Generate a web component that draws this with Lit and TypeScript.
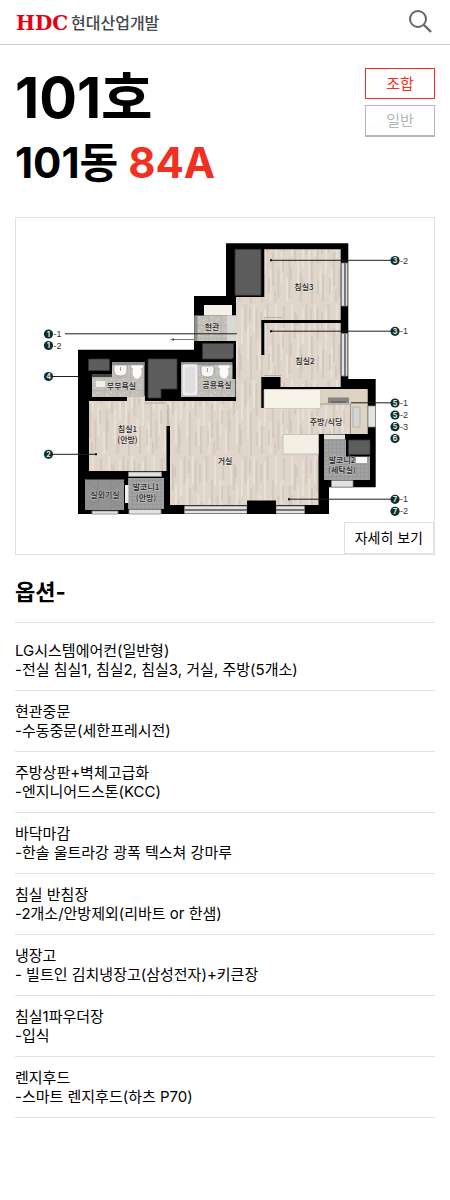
import { LitElement, html, css, svg } from "lit";
import { customElement, property } from "lit/decorators.js";

interface OptionItem {
  title: string;
  detail: string;
}

interface Marker {
  x: number;
  y: number;
  no: string;
  sub?: string;
}

interface RoomLabel {
  x: number;
  y: number;
  text: string;
}

const OPTIONS: OptionItem[] = [
  { title: "LG시스템에어컨(일반형)", detail: "-전실 침실1, 침실2, 침실3, 거실, 주방(5개소)" },
  { title: "현관중문", detail: "-수동중문(세한프레시전)" },
  { title: "주방상판+벽체고급화", detail: "-엔지니어드스톤(KCC)" },
  { title: "바닥마감", detail: "-한솔 울트라강 광폭 텍스쳐 강마루" },
  { title: "침실 반침장", detail: "-2개소/안방제외(리바트 or 한샘)" },
  { title: "냉장고", detail: "- 빌트인 김치냉장고(삼성전자)+키큰장" },
  { title: "침실1파우더장", detail: "-입식" },
  { title: "렌지후드", detail: "-스마트 렌지후드(하츠 P70)" },
];

const MARKERS: Marker[] = [
  { x: 48.5, y: 334, no: "1", sub: "-1" },
  { x: 48.5, y: 345.5, no: "1", sub: "-2" },
  { x: 48.5, y: 376.5, no: "4" },
  { x: 48.5, y: 454.3, no: "2" },
  { x: 395, y: 260.5, no: "3", sub: "-2" },
  { x: 395, y: 331.3, no: "3", sub: "-1" },
  { x: 395, y: 403, no: "5", sub: "-1" },
  { x: 395, y: 415, no: "5", sub: "-2" },
  { x: 395, y: 426.7, no: "5", sub: "-3" },
  { x: 395, y: 438.5, no: "6" },
  { x: 395, y: 499.3, no: "7", sub: "-1" },
  { x: 395, y: 511.3, no: "7", sub: "-2" },
];

const ROOMS: RoomLabel[] = [
  { x: 304, y: 289.5, text: "침실3" },
  { x: 305, y: 363.5, text: "침실2" },
  { x: 212, y: 330, text: "현관" },
  { x: 121.5, y: 388.5, text: "부부욕실" },
  { x: 217, y: 388, text: "공용욕실" },
  { x: 127.5, y: 432, text: "침실1" },
  { x: 127.5, y: 443, text: "(안방)" },
  { x: 225, y: 463.5, text: "거실" },
  { x: 326, y: 424.5, text: "주방/식당" },
  { x: 105, y: 498, text: "실외기실" },
  { x: 146, y: 490, text: "발코니1" },
  { x: 146, y: 501, text: "(안방)" },
  { x: 342, y: 462.5, text: "발코니2" },
  { x: 342, y: 473, text: "(세탁실)" },
];

@customElement("floor-plan")
export class FloorPlan extends LitElement {
  static styles = css`
    :host {
      display: block;
    }
    .plan {
      display: block;
      width: 100%;
      height: auto;
    }
    .room {
      font: 500 8px "Noto Sans CJK KR", sans-serif;
      fill: #222;
      stroke: #fff;
      stroke-opacity: 0.45;
      stroke-width: 1px;
      paint-order: stroke;
      text-anchor: middle;
    }
    .num {
      font: 700 7px Inter, sans-serif;
      fill: #e4efec;
      text-anchor: middle;
    }
    .sub {
      font: 400 9px "Liberation Sans", sans-serif;
      fill: #333;
    }
  `;

  private toilet(x: number, y: number) {
    return svg`<path d="M${x} ${y}h12v3h-1.500c1 6-.5 11-4.500 11s-5.500-5-4.500-11H${x}z" fill="#fbfbfb" stroke="#aaa" stroke-width=".5"/>`;
  }

  private basin(x: number, y: number) {
    return svg`<path d="M${x} ${y}h13v6q0 5-6.500 5t-6.500-5z" fill="#f6f6f6" stroke="#8d8d8d" stroke-width=".7"/>
      <path d="M${x + 6.5} ${y + 2}v4" stroke="#888" stroke-width=".8"/>`;
  }

  render() {
    return html`
      <svg class="plan" viewBox="16 218 418 336" role="img" aria-label="84A 평면도">
        <defs>
          <pattern id="wood" width="61" height="76" patternUnits="userSpaceOnUse">
            <rect width="61" height="76" fill="#dfd5cb" />
            <path
              d="M1.500 0v27M7 32v44M12.500 4v32M18 46v28M23.500 0v25M29 24v34M34.500 40v30M40 2v22M45.500 30v40M51 8v26M56.500 44v30"
              stroke="#d5c9be"
              stroke-width="2"
            />
            <path
              d="M4 22v36M10 0v28M15.500 38v28M21 6v40M26.500 42v32M32 0v30M37.500 24v32M43 50v24M48 0v28M54 30v34M59 4v36"
              stroke="#e8dfd6"
              stroke-width="2"
            />
            <path d="M6 3v14M17 8v18M25 50v16M31 62v12M13 52v14M39 30v14M47 40v12M58 50v16M53 10v12" stroke="#cbbfb4" />
          </pattern>
          <pattern id="tile" width="13" height="13" patternUnits="userSpaceOnUse">
            <rect width="13" height="13" fill="#c2bfb9" />
            <path d="M0 0h13M0 0v13" stroke="#aaa7a1" stroke-width=".8" />
            <path d="M2 4l3 2M8 9l3-2M6 2l2 1M3 10l2 1" stroke="#d6d3cd" />
          </pattern>
          <pattern id="mesh" width="4" height="4" patternUnits="userSpaceOnUse">
            <rect width="4" height="4" fill="#a2a2a2" />
            <path d="M0 0h4M0 0v4" stroke="#8b8b8b" stroke-width=".8" />
          </pattern>
        </defs>

        <path d="M226 243.300H348.300V379H375.700V487.300H329V514H78V349.700H194V296H226z" fill="#000" />

        <g fill="url(#wood)">
          <path d="M264.300 249.300H340.700V320H264.300z" />
          <path d="M264.300 323H340.700V387H280.500V377H264.300z" />
          <path d="M236 297H264.300V320H261.300V355H264.300V377H261.300V408H264V389H367.500V434H318.500V505H170V426H166.500V471H89V401H236z" />
          <path d="M264 355h1v22h-1zM264 297h1v22h-1zM127 396h18v6h-18z" />
        </g>
        <path d="M264 317.500h18M264 375.500h17M146 403h20M168 405v20" stroke="#b6aca2" stroke-width="1.200" fill="none" />

        <path d="M194.500 315.500H236V341H194.500z" fill="url(#tile)" />
        <path d="M227 315.500h9.500V341H227z" fill="#d9d8d2" />
        <path d="M194.500 316h3v25h-3z" fill="#8e8e8c" />
        <path d="M204 305h28v10.500h-28z" fill="#f5f1e6" />

        <g fill="#5d5d5d" stroke="#343434" stroke-width=".8">
          <path d="M235 249.300h26v46h-26z" />
          <path d="M202.500 343.500h31v15.500h-31z" />
          <path d="M88.500 359h21v11.500h-21z" />
          <path d="M148 359h29v30h-16v9h-13z" />
          <path d="M348.500 440h21.500v14.500h-21.500z" />
        </g>

        <path d="M92 374h20v-12h32.500v35H92z" fill="url(#tile)" />
        <path d="M112 362h32.500v3H112z" fill="#8d8d8d" />
        <path d="M92 374h20v3H92z" fill="#444" />
        <path d="M96 381h9v6h-9z" fill="#efefef" />
        ${this.basin(114, 365)} ${this.toilet(131, 365)}

        <path d="M181 362h54.500v35H181z" fill="url(#tile)" />
        <path d="M181 362h54.500v3H181z" fill="#8d8d8d" />
        <rect x="182" y="364" width="16" height="32" rx="2" fill="#ededed" stroke="#aaa" stroke-width=".8" />
        <rect x="185" y="367" width="10" height="26" rx="3" fill="#dedede" />
        ${this.basin(201, 366)} ${this.toilet(218, 365)}
        <path d="M232.500 358h3.500v21h-3.500z" fill="#000" />

        <path d="M264 389.500h56.500v19H264z" fill="#f7f3e9" stroke="#bfb9ad" stroke-width=".6" />
        <path d="M320.500 389.500H367.500V434H350V404H320.500z" fill="#ded2c2" />
        <path d="M320.500 404H350.500V434" fill="none" stroke="#8f8983" stroke-width=".8" />
        <path d="M328 397.500h21v5.500h-21z" fill="#858585" />
        <path d="M331 402h15" stroke="#555" />
        <path d="M353 407h7v20h-7z" fill="#d5d5d3" stroke="#aaa" stroke-width=".8" />
        <path d="M283 434.500h35.500v19.500H283z" fill="#f3efe5" stroke="#bbb5a9" stroke-width=".7" />

        <path d="M324 439.500h22v17h24V480h-46z" fill="url(#mesh)" />
        <path d="M324 434.500h21v5h-21z" fill="#e8e8e8" />
        <path d="M356 457h11v6h-11z" fill="#fafafa" />
        <path d="M85 479.500h39V510H85z" fill="#929292" />
        <path d="M85 479.500l39 30.500M124 479.500L85 510M98 479.500V510M111 479.500V510" stroke="#858585" stroke-width=".7" />
        <path d="M128 478h36v31h-36z" fill="url(#mesh)" />
        <path d="M125 485h3.500v18H125z" fill="#f0f0f0" />

        <g fill="#e2e2e2" stroke="#858585" stroke-width=".8">
          <path d="M128.500 472h33v4.500h-33z" />
          <path d="M92 511h26v3H92z" />
          <path d="M129 509.500h32v4.500h-32z" />
          <path d="M184.500 506h62.500v7.500h-62.500z" />
          <path d="M276 506h28.500v7.500H276z" />
          <path d="M331.500 480.500h21.500v6.500h-21.500z" />
          <path d="M368 406h7.500v21H368z" />
          <path d="M341.500 263h6v43h-6zM341.500 333.500h6v42.500h-6z" />
        </g>
        <path d="M184.500 510h62.500M276 510h28.500M345 263v43M345 333.500v42.500" stroke="#777" stroke-width="2" />
        <path d="M247 500.500h29V514h-29z" fill="#000" />

        <g stroke="#1d1d1d" stroke-width="1" fill="none">
          <path d="M65 333.800H237M53 376.500H78M53 454.300H96" />
          <path d="M271 260.300H391M271 331.200H391M351 402.800H391M289 499.200H391" />
        </g>
        <path d="M173 339.500H195" stroke="#777" stroke-width="1" />
        <path d="M170 339.500l4-1.500v3z" fill="#666" />
        <path d="M95 453.300h2v2h-2zM270 259.300h2v2h-2zM270 330.200h2v2h-2zM288 498.200h2v2h-2z" fill="#111" />

        ${ROOMS.map((r) => svg`<text class="room" x=${r.x} y=${r.y}>${r.text}</text>`)}
        ${MARKERS.map(
          (m) => svg`
            <circle cx=${m.x} cy=${m.y} r="4.600" fill="#0d302d" />
            <text class="num" x=${m.x} y=${m.y + 2.5}>${m.no}</text>
            ${m.sub ? svg`<text class="sub" x=${m.x + 5} y=${m.y + 3}>${m.sub}</text>` : ""}
          `
        )}
      </svg>
    `;
  }
}

@customElement("option-list")
export class OptionList extends LitElement {
  @property({ attribute: false }) items: OptionItem[] = [];

  static styles = css`
    :host {
      display: block;
    }
    .heading {
      margin: 0;
      padding: 22px 0 15px;
      font-size: 22px;
      line-height: 30px;
      font-weight: 700;
      border-bottom: 1px solid #e1e1e1;
    }
    .list {
      margin: 0;
      padding: 7px 0 0;
      list-style: none;
    }
    .item {
      padding: 11px 0;
      font-size: 15px;
      line-height: 19px;
      border-bottom: 1px solid #e1e1e1;
    }
    .line {
      margin: 0;
    }
  `;

  render() {
    return html`
      <h3 class="heading">옵션-</h3>
      <ul class="list">
        ${this.items.map(
          (o) => html`<li class="item">
            <p class="line">${o.title}</p>
            <p class="line">${o.detail}</p>
          </li>`
        )}
      </ul>
    `;
  }
}

@customElement("app-root")
export class AppRoot extends LitElement {
  static styles = css`
    :host {
      display: block;
      min-height: 100vh;
      background: #fff;
      color: #000;
      font-family: Inter, "Noto Sans CJK KR", sans-serif;
    }
    .header {
      display: flex;
      align-items: center;
      justify-content: space-between;
      box-sizing: border-box;
      height: 45px;
      padding: 0 16px;
      border-bottom: 1px solid #ccc;
    }
    .brand {
      display: flex;
      align-items: center;
      color: #444a4d;
      text-decoration: none;
    }
    .brand-svg {
      display: block;
    }
    .hdc {
      font: 700 20px "DejaVu Serif", serif;
      fill: #e60012;
    }
    .company {
      font: 500 16px "Noto Sans CJK KR", sans-serif;
      fill: #43484b;
    }
    .search {
      display: block;
      padding: 0;
      border: 0;
      background: none;
      cursor: pointer;
    }
    .search-icon {
      display: block;
    }
    .content {
      padding: 23px 15px 40px;
    }
    .top {
      display: flex;
      justify-content: space-between;
      align-items: flex-start;
      padding-bottom: 30px;
    }
    .unit,
    .block {
      margin: 0;
      font-weight: 700;
    }
    .unit {
      font-size: 56px;
      line-height: 60px;
    }
    .block {
      font-size: 42px;
      line-height: 48px;
      padding-top: 11px;
    }
    .type {
      color: #f23022;
    }
    .kinds {
      display: flex;
      flex-direction: column;
      gap: 6px;
    }
    .kind {
      box-sizing: border-box;
      width: 70px;
      height: 32px;
      padding: 0;
      border: 1px solid #b5b5b5;
      border-bottom-width: 2px;
      background: #fff;
      color: #b5b5b5;
      font-family: inherit;
      font-size: 15px;
      line-height: 28px;
    }
    .kind.on {
      height: 31px;
      border: 1px solid #f23022;
      color: #f23022;
    }
    .frame {
      position: relative;
      border: 1px solid #e1e1e1;
    }
    .more {
      position: absolute;
      right: 0;
      bottom: 0;
      box-sizing: border-box;
      height: 32px;
      padding: 0 10px;
      border: 1px solid #e1e1e1;
      background: #fff;
      color: #000;
      font-family: inherit;
      font-size: 14px;
      line-height: 28px;
      white-space: nowrap;
    }
  `;

  render() {
    return html`
      <header class="header">
        <a class="brand" href="#" aria-label="HDC 현대산업개발">
          <svg class="brand-svg" width="144" height="24" viewBox="0 0 144 24">
            <text class="hdc" x="0" y="20">HDC</text>
            <text class="company" x="55" y="19">현대산업개발</text>
          </svg>
        </a>
        <button class="search" type="button" aria-label="검색">
          <svg class="search-icon" width="26" height="26" viewBox="0 0 26 26" fill="none" stroke="#666" stroke-width="2">
            <circle cx="10" cy="10" r="8" />
            <path d="M16 16L23 23" stroke-width="2.400" />
          </svg>
        </button>
      </header>
      <main class="content">
        <section class="top">
          <div>
            <h1 class="unit">101호</h1>
            <h2 class="block">101동 <span class="type">84A</span></h2>
          </div>
          <div class="kinds">
            <button class="kind on" type="button">조합</button>
            <button class="kind" type="button">일반</button>
          </div>
        </section>
        <div class="frame">
          <floor-plan></floor-plan>
          <button class="more" type="button">자세히 보기</button>
        </div>
        <option-list .items=${OPTIONS}></option-list>
      </main>
    `;
  }
}
